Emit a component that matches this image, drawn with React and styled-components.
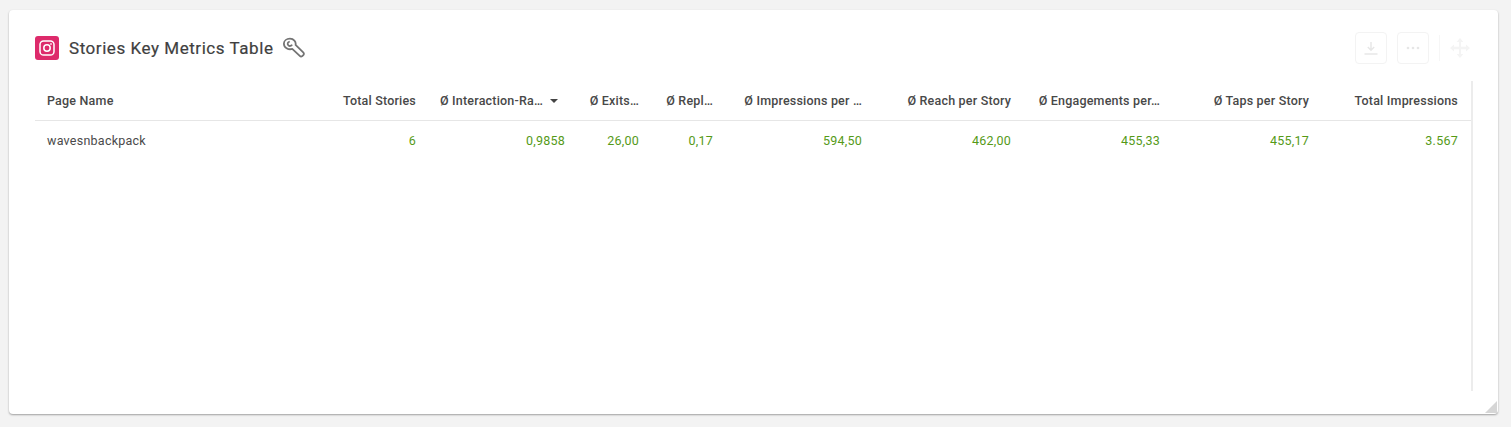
import React from "react";
import styled, { createGlobalStyle } from "styled-components";

const Global = createGlobalStyle`
  html, body { margin: 0; padding: 0; background: #f3f3f3; }
  body { font-family: Roboto, "Liberation Sans", sans-serif; }
`;

const Page = styled.div`
  width: 1511px;
  height: 427px;
  padding: 10px 13px 13px 9px;
  box-sizing: border-box;
`;

const Card = styled.section`
  position: relative;
  height: 100%;
  box-sizing: border-box;
  background: #fff;
  border-radius: 4px;
  box-shadow: 0 1px 2px rgba(0, 0, 0, 0.35);
  padding: 22px 0 0 26px;
  display: flex;
  flex-direction: column;
`;

const Header = styled.header`
  display: flex;
  align-items: center;
  height: 32px;
  margin-bottom: 17px;
  padding-right: 28px;
`;

const Brand = styled.span`
  width: 24px;
  height: 24px;
  border-radius: 3px;
  background: #dd2a6b;
  display: flex;
  align-items: center;
  justify-content: center;
  margin-right: 10px;
`;

const Title = styled.h2`
  margin: 0;
  font-size: 17px;
  font-weight: 400;
  letter-spacing: 0.55px;
  color: #3f3f3f;
  -webkit-text-stroke: 0.2px #3f3f3f;
`;

const KeyIcon = styled.svg`
  width: 23px;
  height: 23px;
  margin-left: 9px;
`;

const Actions = styled.div`
  margin-left: auto;
  display: flex;
  align-items: center;
  gap: 10px;
`;

const ActionButton = styled.span`
  width: 30px;
  height: 30px;
  border: 1px solid #f3f3f3;
  border-radius: 4px;
  display: flex;
  align-items: center;
  justify-content: center;
`;

const Divider = styled.span`
  width: 1px;
  height: 26px;
  background: #f6f6f6;
`;

const TableWrap = styled.div`
  width: 1438px;
  height: 310px;
  box-sizing: border-box;
  border-right: 2px solid #ececec;
`;

const Row = styled.div`
  display: grid;
  grid-template-columns: 244px 149px 149px 74px 74px 149px 149px 149px 149px 149px;
  height: 40px;
  align-items: center;
  border-bottom: ${(p) => (p.$head ? "1px solid #e6e6e6" : "none")};
  box-sizing: border-box;
`;

const HeadCell = styled.div`
  padding: 0 12px;
  font-size: 12.5px;
  font-weight: 500;
  color: #484848;
  letter-spacing: 0.2px;
  display: flex;
  justify-content: ${(p) => (p.$left ? "flex-start" : "flex-end")};
  align-items: center;
  white-space: nowrap;
`;

const Cell = styled.div`
  padding: 0 12px 2px;
  font-size: 12.5px;
  letter-spacing: 0.25px;
  color: ${(p) => (p.$left ? "#4a4a4a" : "#559a18")};
  text-align: ${(p) => (p.$left ? "left" : "right")};
  white-space: nowrap;
`;

const SortCaret = styled.span`
  flex: none;
  width: 0;
  height: 0;
  margin: 0 7px 0 7px;
  border-left: 4px solid transparent;
  border-right: 4px solid transparent;
  border-top: 4px solid #444;
`;

const Grip = styled.span`
  position: absolute;
  right: 1px;
  bottom: 1px;
  width: 12px;
  height: 12px;
  background: #d6d6d6;
  clip-path: polygon(100% 0, 100% 100%, 0 100%);
`;

const headers = [
  "Page Name", "Total Stories", "Ø Interaction-Ra…", "Ø Exits…", "Ø Repl…",
  "Ø Impressions per …", "Ø Reach per Story", "Ø Engagements per…", "Ø Taps per Story", "Total Impressions",
];
const values = ["wavesnbackpack", "6", "0,9858", "26,00", "0,17", "594,50", "462,00", "455,33", "455,17", "3.567"];

export default function App() {
  return (
    <Page>
      <Global />
      <Card>
        <Header>
          <Brand>
            <svg width="16" height="16" viewBox="0 0 16 16" fill="none" stroke="#fff" strokeWidth="1.5">
              <rect x="1" y="1" width="14" height="14" rx="3.6" />
              <circle cx="8" cy="8" r="3.2" />
              <circle cx="12" cy="4" r="0.6" fill="#fff" strokeWidth="0.6" />
            </svg>
          </Brand>
          <Title>Stories Key Metrics Table</Title>
          <KeyIcon viewBox="0 0 22 22" fill="none" stroke="#737373" strokeWidth="1.7" strokeLinejoin="round">
            <path d="M7.6 1.6 C11.2 1.6 13.6 4.4 13 7.6 L20.3 14.8 C21 15.5 21 16.6 20.4 17.3 L19.4 18.2 C18.7 18.8 17.7 18.8 17 18.1 L9.8 11.4 C6 12.6 1.8 10 1.8 6.4 C1.8 3.6 4.4 1.6 7.6 1.6 Z" />
            <path d="M7.4 4.4 C5.4 4.6 4.8 6.8 6.1 8 C7.2 9 9 8.7 9.6 7.4" />
          </KeyIcon>
          <Actions>
            <ActionButton>
              <svg width="14" height="14" viewBox="0 0 14 14" fill="none" stroke="#e6e6e6" strokeWidth="1.4">
                <path d="M7 1 V9 M3.8 6 L7 9.2 L10.2 6" />
                <path d="M0.5 13 H13.5" />
              </svg>
            </ActionButton>
            <ActionButton>
              <svg width="14" height="4" viewBox="0 0 14 4" fill="#e6e6e6">
                <circle cx="2" cy="2" r="1.3" />
                <circle cx="7" cy="2" r="1.3" />
                <circle cx="12" cy="2" r="1.3" />
              </svg>
            </ActionButton>
            <Divider />
            <svg width="20" height="20" viewBox="0 0 20 20" fill="#f4f4f4">
              <path d="M10 0 L13.4 4 H11 V8.8 H16 V6.6 L20 10 L16 13.4 V11.2 H11 V16 H13.4 L10 20 L6.6 16 H9 V11.2 H4 V13.4 L0 10 L4 6.6 V8.8 H9 V4 H6.6 Z" />
            </svg>
          </Actions>
        </Header>
        <TableWrap>
          <Row $head>
            {headers.map((h, i) => (
              <HeadCell key={h} $left={i === 0}>
                {h}
                {i === 2 && <SortCaret />}
              </HeadCell>
            ))}
          </Row>
          <Row>
            {values.map((v, i) => (
              <Cell key={i} $left={i === 0}>{v}</Cell>
            ))}
          </Row>
        </TableWrap>
        <Grip />
      </Card>
    </Page>
  );
}
